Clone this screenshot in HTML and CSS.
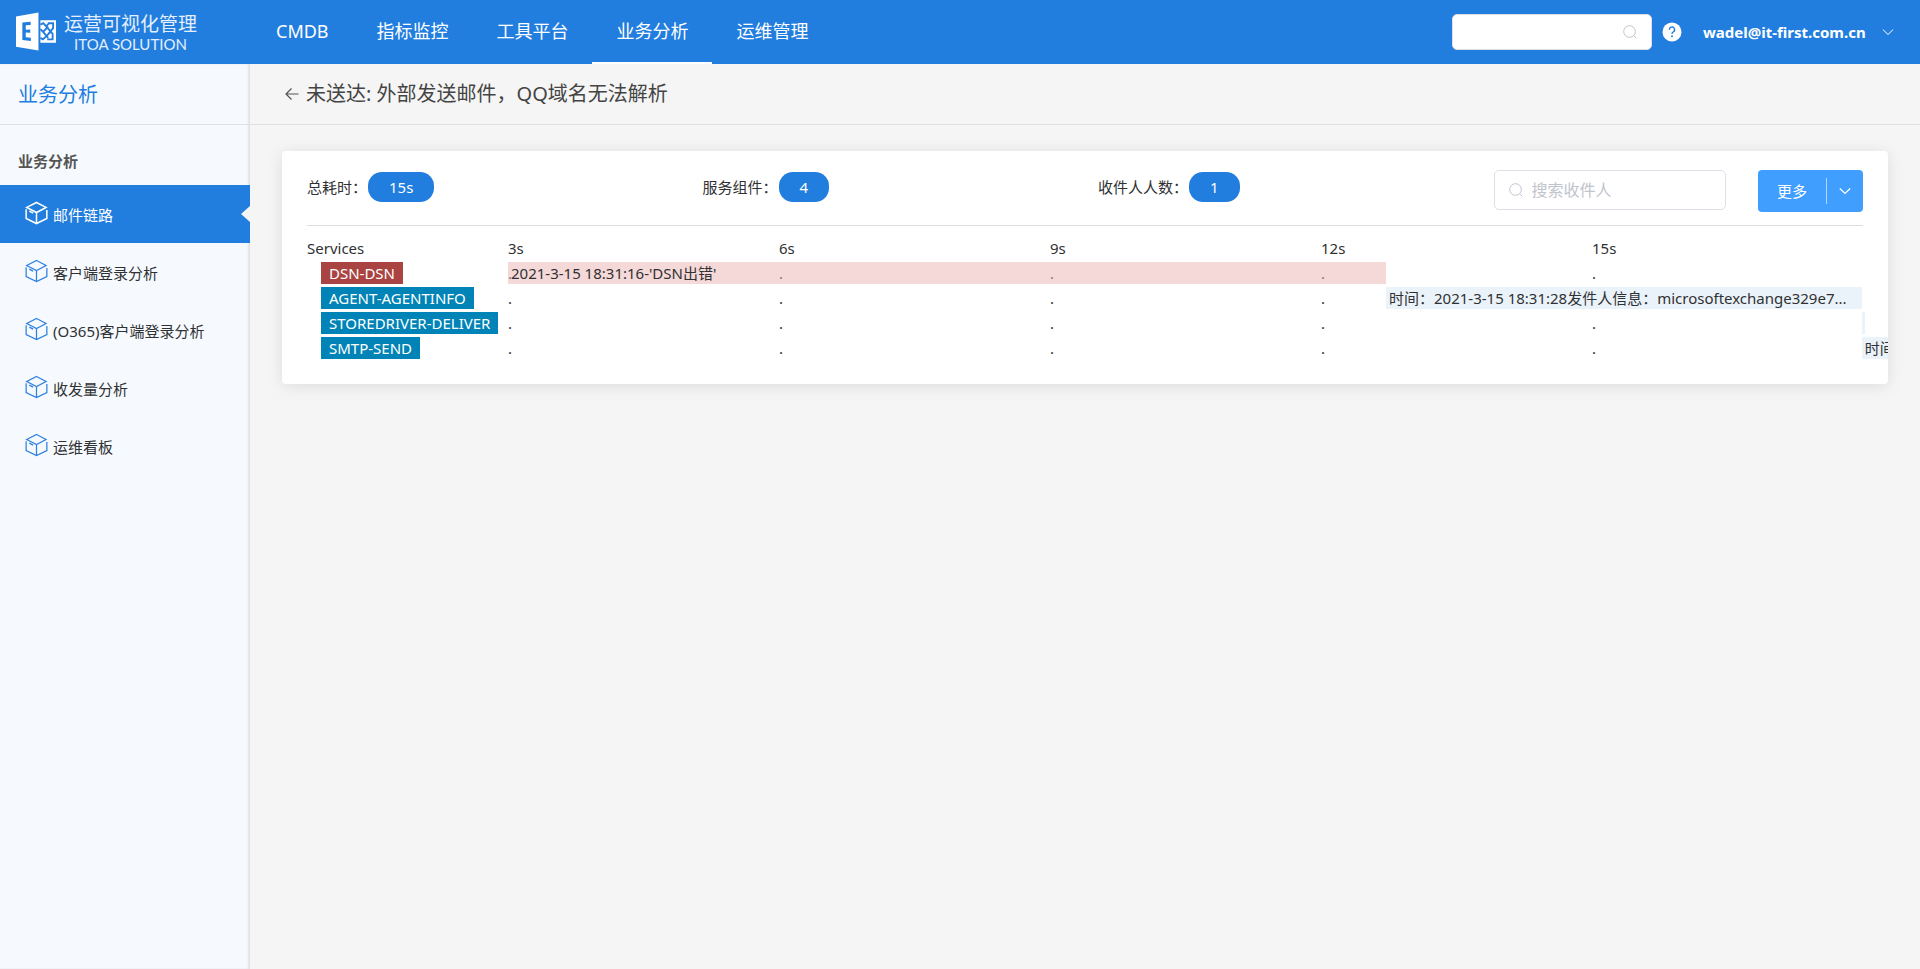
FILE: index.html
```html
<!DOCTYPE html>
<html lang="zh-CN">
<head>
<meta charset="utf-8">
<title>业务分析</title>
<link rel="stylesheet" href="styles.css">
</head>
<body>
<svg width="0" height="0" class="sprite" aria-hidden="true">
  <symbol id="cube" viewBox="0 0 24 24">
    <path d="M12 1 22 6.200 12 11.500 1.800 6.200ZM1.200 8v9.800L12 23l10.800-5.200V8.800M12 11.500V23M4.500 10l4 2.100"/>
  </symbol>
  <symbol id="search" viewBox="0 0 14 14">
    <circle cx="6.5" cy="6.5" r="5.8"/><path d="m10.8 10.8 2.6 2.6"/>
  </symbol>
  <symbol id="chevron" viewBox="0 0 12 12"><path d="m.8 3.5 5.2 5 5.2-5"/></symbol>
</svg>

<header class="topbar">
  <a class="logo" href="#">
    <svg class="logo-mark" viewBox="0 0 42 40" aria-hidden="true">
      <path fill="#fff" d="M0 4.200 23 0v39L0 35zM25 8h16v23H25z"/>
      <path fill="#217dde" d="M6.500 10.300 15 9.500v3.300l-5 .4v4.400l4.600-.1v3.200L10 20.600v4.800l5.200.4v3.300l-8.700-.8z"/>
      <path fill="none" stroke="#217dde" stroke-width="1.900" d="M25 12.500l3-1.500 4 4.500 5.500 6.500v5.500H32M25 26l2.500 1.500 4.500-4 6-7.500v-5h-5.500M25 17l4.500 5 3.500 4M31 14l3-3M28 19.500l5-5M30.500 25l6-6.500"/>
    </svg>
    <span class="logo-text"><span class="logo-name">运营可视化管理</span><span class="logo-sub">ITOA SOLUTION</span></span>
  </a>
  <nav class="nav">
    <a href="#">CMDB</a>
    <a href="#">指标监控</a>
    <a href="#">工具平台</a>
    <a href="#" class="is-active">业务分析</a>
    <a href="#">运维管理</a>
  </nav>
  <div class="tools">
    <label class="top-search">
      <input type="text" aria-label="搜索">
      <svg class="line-icon" aria-hidden="true"><use href="#search"/></svg>
    </label>
    <button class="help" type="button" aria-label="帮助">
      <svg viewBox="0 0 20 20" aria-hidden="true"><circle cx="10" cy="10" r="9.500" fill="#fff"/><path d="M7.400 7.700a2.600 2.600 0 1 1 3.800 2.300c-.8.400-1.200.8-1.200 2" fill="none" stroke="#217dde" stroke-width="1.400"/><circle cx="10" cy="14.200" r="1" fill="#217dde"/></svg>
    </button>
    <button class="account" type="button">wadel@it-first.com.cn<svg class="line-icon" aria-hidden="true"><use href="#chevron"/></svg></button>
  </div>
</header>

<div class="layout">
  <aside class="sidebar">
    <h2 class="side-title">业务分析</h2>
    <h3 class="side-group">业务分析</h3>
    <nav class="side-nav">
      <a href="#" class="is-active"><svg aria-hidden="true"><use href="#cube"/></svg><span>邮件链路</span></a>
      <a href="#"><svg aria-hidden="true"><use href="#cube"/></svg><span>客户端登录分析</span></a>
      <a href="#"><svg aria-hidden="true"><use href="#cube"/></svg><span>(O365)客户端登录分析</span></a>
      <a href="#"><svg aria-hidden="true"><use href="#cube"/></svg><span>收发量分析</span></a>
      <a href="#"><svg aria-hidden="true"><use href="#cube"/></svg><span>运维看板</span></a>
    </nav>
  </aside>

  <main class="main">
    <div class="page-head">
      <button class="back" type="button" aria-label="返回"><svg viewBox="0 0 14 14" aria-hidden="true"><path d="M13.500 7H1M6.500 1.500 1 7l5.500 5.500"/></svg></button>
      <h1>未送达: 外部发送邮件，QQ域名无法解析</h1>
    </div>

    <section class="card">
      <div class="summary">
        <div class="stat">总耗时：<span class="pill">15s</span></div>
        <div class="stat">服务组件：<span class="pill">4</span></div>
        <div class="stat">收件人人数：<span class="pill">1</span></div>
        <div class="actions">
          <label class="find">
            <svg class="line-icon" aria-hidden="true"><use href="#search"/></svg>
            <input type="text" placeholder="搜索收件人" aria-label="搜索收件人">
          </label>
          <div class="split">
            <button type="button">更多</button>
            <button type="button" class="split-toggle" aria-label="展开"><svg class="line-icon" aria-hidden="true"><use href="#chevron"/></svg></button>
          </div>
        </div>
      </div>

      <div class="trace">
        <div class="trace-row trace-head">
          <div>Services</div>
          <div class="track"><span>3s</span><span>6s</span><span>9s</span><span>12s</span><span>15s</span></div>
        </div>
        <div class="trace-row">
          <div class="service"><span class="tag tag-error">DSN-DSN</span></div>
          <div class="track"><span>.</span><span>.</span><span>.</span><span>.</span><span>.</span>
            <div class="bar bar-error" style="left:0%;width:64.8%">2021-3-15 18:31:16-'DSN出错'</div></div>
        </div>
        <div class="trace-row">
          <div class="service"><span class="tag">AGENT-AGENTINFO</span></div>
          <div class="track"><span>.</span><span>.</span><span>.</span><span>.</span>
            <div class="bar" style="left:64.8%;width:35.1%">时间：2021-3-15 18:31:28发件人信息：microsoftexchange329e7...</div></div>
        </div>
        <div class="trace-row">
          <div class="service"><span class="tag">STOREDRIVER-DELIVER</span></div>
          <div class="track"><span>.</span><span>.</span><span>.</span><span>.</span><span>.</span>
            <div class="bar" style="left:99.9%;width:0.2%"></div></div>
        </div>
        <div class="trace-row">
          <div class="service"><span class="tag">SMTP-SEND</span></div>
          <div class="track"><span>.</span><span>.</span><span>.</span><span>.</span><span>.</span>
            <div class="bar" style="left:99.9%;width:35.1%">时间</div></div>
        </div>
      </div>
    </section>
  </main>
</div>
</body>
</html>
```
FILE: styles.css
```css
* { box-sizing: border-box; }
body {
  margin: 0;
  min-height: 100vh;
  display: flex;
  flex-direction: column;
  background: #f5f5f5;
  color: #303133;
  font: 15px/22px "Noto Sans", "Noto Sans CJK SC", sans-serif;
}
a { color: inherit; text-decoration: none; }
h1, h2, h3 { margin: 0; }
button, input { font: inherit; color: inherit; border: 0; padding: 0; background: none; }
input { outline: none; min-width: 0; }
.sprite { position: absolute; }
.line-icon { fill: none; stroke: currentColor; flex: none; }

.topbar {
  display: flex;
  height: 64px;
  background: #217dde;
  color: #fff;
}
.logo { display: flex; align-items: center; gap: 7px; width: 251px; padding-left: 16px; }
.logo-mark { width: 41px; height: 40px; flex: none; }
.logo-text { display: flex; flex-direction: column; align-items: center; padding-top: 2px; color: #e3effc; }
.logo-name { font-size: 19px; line-height: 22px; }
.logo-sub { font: 15px/18px Lato, sans-serif; }
.nav { display: flex; font-size: 18px; }
.nav a {
  padding: 0 23px 0 25px;
  line-height: 62px;
  border-bottom: 2px solid transparent;
}
.nav a.is-active { border-color: #fff; }
.tools { display: flex; align-items: center; margin-left: auto; padding-right: 26px; }
.top-search {
  display: flex;
  align-items: center;
  width: 200px;
  height: 36px;
  padding: 0 14px;
  border: 1px solid #dcdfe6;
  border-radius: 5px;
  background: #fff;
}
.top-search input { flex: 1; color: #303133; }
.top-search svg, .find svg { width: 14px; height: 14px; color: #c0c4cc; }
.help { width: 20px; height: 20px; margin: 0 21px 0 10px; }
.help svg { display: block; }
.account { display: flex; align-items: center; justify-content: space-between; width: 191px; font-weight: 700; }
.account svg { width: 12px; height: 12px; }

.layout { flex: 1; display: flex; }
.sidebar {
  width: 250px;
  flex: none;
  background: #f6fafe;
  box-shadow: inset -2px 0 2px #dfe3e8;
}
.side-title {
  height: 61px;
  padding-left: 18px;
  border-bottom: 1px solid #dfe0e2;
  color: #217dde;
  font-size: 20px;
  font-weight: 400;
  line-height: 62px;
}
.side-group { padding: 25px 18px 13px; font-size: 15px; line-height: 22px; color: #555; }
.side-nav a { display: flex; align-items: center; gap: 5px; height: 58px; padding-left: 25px; position: relative; }
.side-nav svg { width: 23px; height: 24px; margin-bottom: 2px; fill: none; stroke: #2f80e0; stroke-width: 1.3; }
.side-nav span { padding-top: 2px; }
.side-nav .is-active { background: #217dde; color: #fff; }
.side-nav .is-active svg { stroke: #fff; stroke-width: 1.6; }
.side-nav .is-active::after {
  content: "";
  position: absolute;
  right: 0;
  top: 21px;
  border: 8px solid transparent;
  border-left: 0;
  border-right: 9px solid #f5f5f5;
}

.main { flex: 1; min-width: 0; }
.page-head {
  display: flex;
  align-items: center;
  gap: 7px;
  height: 61px;
  padding-left: 35px;
  border-bottom: 1px solid #dfdfdf;
}
.page-head h1 { font-size: 20px; font-weight: 400; line-height: 28px; color: #444; }
.back svg { display: block; width: 14px; height: 14px; fill: none; stroke: #555; stroke-width: 1.2; }
.card {
  margin: 26px 32px;
  padding: 19px 25px 25px;
  overflow: hidden;
  border-radius: 4px;
  background: #fff;
  box-shadow: 0 2px 16px rgba(0, 0, 0, .1);
}
.summary {
  display: grid;
  grid-template-columns: repeat(4, minmax(0, 1fr));
  column-gap: 26px;
  height: 56px;
  border-bottom: 1px solid #dcdfe0;
}
.stat { display: flex; align-items: center; height: 34px; }
.pill {
  margin-left: 1px;
  padding: 4px 21px;
  border-radius: 14px;
  background: #217dde;
  color: #fff;
}
.actions { display: flex; align-items: flex-start; gap: 32px; }
.find {
  flex: 1;
  min-width: 0;
  display: flex;
  align-items: center;
  gap: 9px;
  height: 40px;
  padding: 0 14px;
  border: 1px solid #dcdfe6;
  border-radius: 5px;
}
.find input { flex: 1; font-size: 16px; }
.find input::placeholder { color: #c0c4cc; opacity: 1; }
.split { display: flex; width: 105px; height: 42px; border-radius: 4px; background: #409eff; color: #fff; }
.split button { flex: 1; }
.split .split-toggle { flex: none; width: 37px; position: relative; }
.split-toggle::before {
  content: "";
  position: absolute;
  left: 0;
  top: 8px;
  bottom: 8px;
  width: 1px;
  background: #b3d8ff;
}
.split-toggle svg { display: block; width: 12px; height: 12px; margin: auto; stroke-width: 1.2; }

.trace { display: grid; row-gap: 3px; padding-top: 11px; }
.trace-row { display: grid; grid-template-columns: 201px minmax(0, 1fr); height: 22px; }
.service { padding-left: 14px; }
.tag { display: inline-block; padding: 0 8px; background: #0083b6; color: #fff; }
.tag-error { background: #a94442; }
.track { position: relative; display: grid; grid-template-columns: repeat(5, 1fr); }
.bar {
  position: absolute;
  top: 0;
  height: 22px;
  padding-left: 3px;
  overflow: hidden;
  white-space: nowrap;
  background: rgba(216, 232, 245, .5);
}
.bar-error { background: rgba(235, 179, 179, .5); }
```
